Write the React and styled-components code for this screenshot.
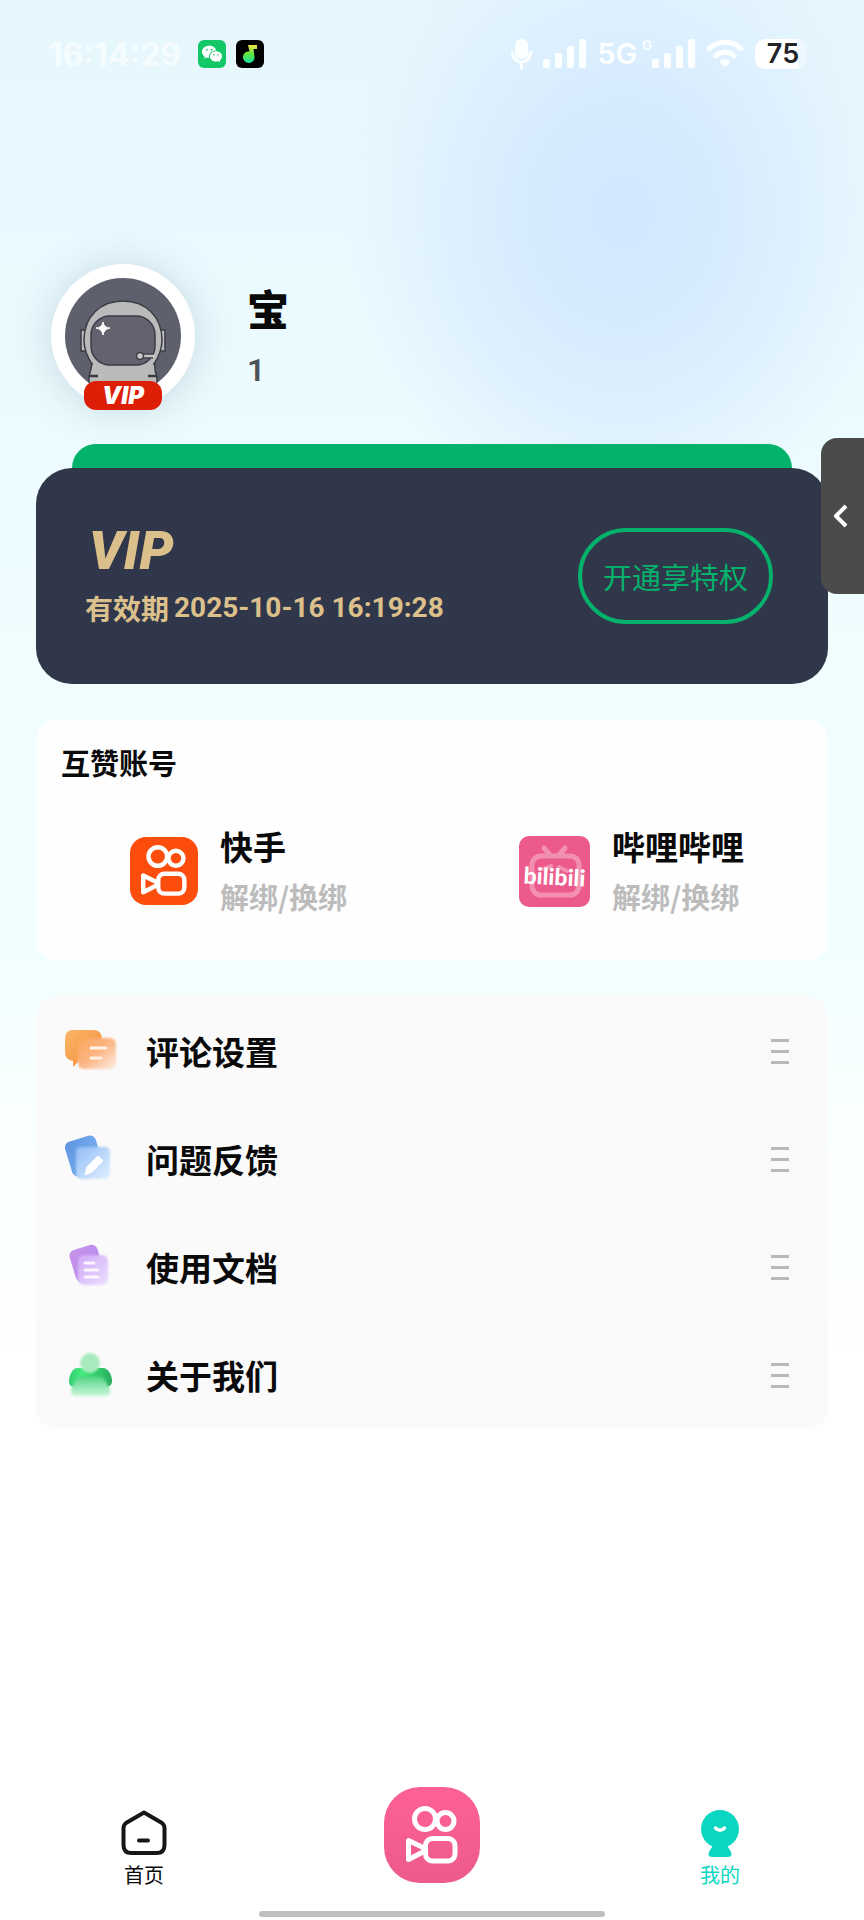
import styled, { createGlobalStyle, ThemeProvider } from 'styled-components';
import { RiWechatFill } from 'react-icons/ri';

const theme = {
  colors: {
    black: '#0a0a0a',
    gray: '#bcbcbc',
    slate: '#4d5258',
    green: '#04b26b',
    navy: '#31374a',
    gold: '#dcc08c',
    teal: '#0bd6c2',
    pink: '#fb5f92',
  },
  numberFont: "Roboto, 'Noto Sans CJK SC', sans-serif",
};

const GlobalStyle = createGlobalStyle`
  * {
    box-sizing: border-box;
  }
  body {
    margin: 0;
    font-family: 'Noto Sans CJK SC', sans-serif;
    color: #0a0a0a;
  }
  button {
    padding: 0;
    border: none;
    background: none;
    font-family: inherit;
    color: inherit;
    cursor: pointer;
  }
  a {
    color: inherit;
    text-decoration: none;
  }
  svg {
    display: block;
  }
`;

const Page = styled.div`
  position: relative;
  display: flex;
  flex-direction: column;
  min-height: 100vh;
  background:
    radial-gradient(ellipse 32% 17% at 72% 11%, #d2e8fe 0%, #d6ebfe 35%, #dff1fe 65%, rgba(230, 246, 255, 0) 100%),
    linear-gradient(#e6f6fd 0%, #eafaff 16%, #effdff 33%, #f2ffff 50%, #fbffff 60%, #ffffff 74%);
`;

/* status bar */
const StatusBar = styled.header`
  display: flex;
  justify-content: space-between;
  align-items: center;
  height: 108px;
  padding: 0 57px 0 49px;
  font-family: Inter, sans-serif;
  font-weight: 600;
  color: #fbffff;
`;

const StatusGroup = styled.div`
  display: flex;
  align-items: center;
  gap: ${({ gap }) => gap}px;
`;

const Clock = styled.time`
  width: 139px;
  font-size: 32px;
  font-weight: 700;
  opacity: 0.7;
`;

const AppBadge = styled.span`
  display: flex;
  justify-content: center;
  align-items: center;
  width: 28px;
  height: 28px;
  border-radius: 6px;
  background: ${({ color }) => color};
  color: #fff;
`;

const Network = styled.span`
  display: flex;
  align-items: flex-start;
  font-size: 29px;
  line-height: 32px;
`;

const Roaming = styled.sup`
  margin-left: 5px;
  font-size: 13px;
  line-height: 14px;
`;

const Battery = styled.span`
  width: 52px;
  height: 30px;
  padding-left: 4px;
  border-radius: 10px;
  background: linear-gradient(90deg, #fff 82%, rgba(255, 255, 255, 0.4) 82%);
  font-size: 27px;
  line-height: 30px;
  text-align: center;
  color: #22242a;
`;

/* profile */
const Profile = styled.section`
  display: flex;
  gap: 52px;
  padding: 156px 51px 36px;
`;

const Avatar = styled.div`
  position: relative;
  display: flex;
  justify-content: center;
  align-items: center;
  width: 144px;
  height: 144px;
  border-radius: 50%;
  background: #fff;
  box-shadow: 0 2px 42px rgba(80, 110, 120, 0.24);
`;

const AvatarTag = styled.span`
  position: absolute;
  left: 50%;
  bottom: -2px;
  width: 78px;
  height: 29px;
  margin-left: -39px;
  border-radius: 12px;
  background: #dd1f07;
  font-family: Inter, sans-serif;
  font-size: 24px;
  font-style: italic;
  font-weight: 900;
  line-height: 29px;
  text-align: center;
  color: #fff;
`;

const ProfileText = styled.div`
  display: flex;
  flex-direction: column;
  gap: 14px;
  padding-top: 16px;
`;

const Nickname = styled.h1`
  margin: 0;
  font-size: 42px;
  font-weight: 900;
  line-height: 56px;
`;

const UserId = styled.span`
  font-family: ${({ theme }) => theme.numberFont};
  font-size: 32px;
  font-weight: 600;
  line-height: 40px;
  color: ${({ theme }) => theme.colors.slate};
`;

/* vip */
const VipStrip = styled.div`
  height: 24px;
  margin: 0 72px;
  border-radius: 24px 24px 0 0;
  background: ${({ theme }) => theme.colors.green};
`;

const VipCard = styled.section`
  display: flex;
  justify-content: space-between;
  align-items: center;
  margin: 0 36px 36px;
  padding: 56px 55px 56px 49px;
  border-radius: 36px;
  background: ${({ theme }) => theme.colors.navy};
  color: ${({ theme }) => theme.colors.gold};
`;

const VipInfo = styled.div`
  display: flex;
  flex-direction: column;
  gap: 10px;
`;

const VipTitle = styled.strong`
  padding-left: 4px;
  font-family: Roboto, sans-serif;
  font-size: 54px;
  font-style: italic;
  font-weight: 900;
  line-height: 54px;
`;

const Expire = styled.span`
  display: flex;
  gap: 5px;
  font-size: 28px;
  font-weight: 700;
  line-height: 40px;

  time {
    font-family: ${({ theme }) => theme.numberFont};
  }
`;

const OpenButton = styled.button`
  width: 195px;
  height: 96px;
  border: 4px solid ${({ theme }) => theme.colors.green};
  border-radius: 48px;
  font-size: 29px;
  color: ${({ theme }) => theme.colors.green};
`;

const SideHandle = styled.button`
  position: absolute;
  top: 438px;
  right: 0;
  display: flex;
  align-items: center;
  width: 43px;
  height: 156px;
  padding-left: 12px;
  border-radius: 16px 0 0 16px;
  background: #4b4b4b;
`;

/* cards */
const Card = styled.section`
  margin: 0 36px 36px;
  border-radius: 20px;
  background: ${({ background }) => background};
`;

const CardTitle = styled.h2`
  margin: 0;
  padding: 21px 25px 0;
  font-size: 29px;
  line-height: 42px;
`;

const AccountList = styled.div`
  display: grid;
  grid-template-columns: 1fr 1fr;
  padding: 41px 0 42px 6px;
`;

const Account = styled.div`
  display: flex;
  justify-content: center;
  align-items: center;
  gap: 22px;
`;

const AccountText = styled.div`
  display: flex;
  flex-direction: column;
  align-items: flex-start;
  gap: 6px;
`;

const AccountName = styled.strong`
  font-size: 33px;
  line-height: 44px;
`;

const BindButton = styled.button`
  font-size: 29px;
  font-weight: 700;
  line-height: 44px;
  color: ${({ theme }) => theme.colors.gray};
`;

const LogoBox = styled.span`
  display: flex;
  justify-content: center;
  align-items: center;
  width: ${({ size }) => size}px;
  height: ${({ size }) => size}px;
  border-radius: ${({ radius }) => radius}px;
  background: ${({ background }) => background};
`;

/* menu */
const MenuRow = styled.button`
  display: flex;
  align-items: center;
  gap: 26px;
  width: 100%;
  height: 108px;
  padding: 2px 39px 0 26px;
  font-size: 33px;
  font-weight: 700;
`;

const MenuLabel = styled.span`
  flex: 1;
  text-align: left;
`;

/* bottom tabs */
const TabBar = styled.nav`
  display: grid;
  grid-template-columns: repeat(3, 1fr);
  justify-items: center;
  margin-top: auto;
`;

const Tab = styled.a`
  display: flex;
  flex-direction: column;
  align-items: center;
  gap: 4px;
  padding-top: 22px;
  font-size: 20px;
  line-height: 28px;
  color: ${({ theme, $active }) => ($active ? theme.colors.teal : theme.colors.black)};
`;

const HomeIndicator = styled.div`
  width: 40%;
  height: 6px;
  margin: 22px auto 3px;
  border-radius: 3px;
  background: #bfbfbf;
`;

const SignalIcon = () => (
  <svg width='43' height='30' viewBox='0 0 43 30' fill='currentColor'>
    <rect x='0' y='20' width='7' height='9' rx='2' />
    <rect x='12' y='14' width='7' height='15' rx='2' />
    <rect x='24' y='7' width='7' height='22' rx='2' />
    <rect x='36' y='0' width='7' height='29' rx='2' />
  </svg>
);

const MicIcon = () => (
  <svg width='21' height='32' viewBox='0 0 21 32' fill='none' stroke='currentColor' strokeWidth='3'>
    <rect x='4' y='1' width='13' height='20' rx='6' fill='currentColor' stroke='none' />
    <path d='M1.500 14c0 6 4 10 9 10s9-4 9-10M10.500 24v7' strokeLinecap='round' />
  </svg>
);

const WifiIcon = () => (
  <svg width='38' height='30' viewBox='0 0 38 30' fill='none' stroke='currentColor' strokeWidth='5' strokeLinecap='round'>
    <path d='M3 9.500C12 1 26 1 35 9.500' />
    <path d='M9.500 17c5.500-5 13.500-5 19 0' />
    <path d='M15 22.500q4-3 8 0L19 27z' fill='currentColor' strokeWidth='2' strokeLinejoin='round' />
  </svg>
);

const MusicIcon = () => (
  <svg width='28' height='28' viewBox='0 0 28 28'>
    <defs>
      <linearGradient id='music' x1='0' y1='0' x2='0' y2='1'>
        <stop offset='0' stopColor='#f2e34c' />
        <stop offset='0.5' stopColor='#5be83f' />
        <stop offset='1' stopColor='#18dfa5' />
      </linearGradient>
    </defs>
    <path d='M12 5h9v4h-3.500l1 7.500a5.800 5.800 0 1 1-5-5z' fill='url(#music)' />
  </svg>
);

const Astronaut = () => (
  <svg width='116' height='116' viewBox='0 0 116 116'>
    <defs>
      <clipPath id='face'>
        <circle cx='58' cy='58' r='58' />
      </clipPath>
    </defs>
    <g clipPath='url(#face)' stroke='#3a3b44' strokeWidth='1.500'>
      <rect width='116' height='116' fill='#5f606d' stroke='none' />
      <path d='M27 84q-1 9-3 14v22h68V98q-3-5-2-14z' fill='#bababa' />
      <path d='M20 52h-4v21h5zM96 52h4v21h-5z' fill='#bababa' />
      <path
        d='M58 23c-22 0-39 15-39 39 0 11 4 18 8 24h62c4-6 8-13 8-24 0-24-17-39-39-39z'
        fill='#bababa'
      />
      <path d='M28 83h60v7H28z' fill='#bababa' stroke='none' />
      <rect x='26' y='38' width='64' height='49' rx='19' fill='#62636f' />
      <path d='M76 78h12' stroke='#3a3b44' strokeWidth='5' />
      <path d='M76 78h14' stroke='#c6c6c6' strokeWidth='2.500' />
      <circle cx='75' cy='78' r='3.500' fill='#c6c6c6' />
      <path d='M24 98h9M83 98h9' strokeWidth='2.500' />
    </g>
    <path d='M38 44q1 6 7 6-6 1-7 7-1-6-7-7 6 0 7-6z' fill='#fff' stroke='#fff' strokeLinejoin='round' />
  </svg>
);

const KuaishouGlyph = ({ width }) => (
  <svg width={width} viewBox='0 0 52 58' fill='none' stroke='#fff' strokeWidth='5' strokeLinejoin='round'>
    <circle cx='19' cy='13' r='10.500' />
    <circle cx='39.500' cy='15' r='8.500' />
    <rect x='19.500' y='32.500' width='29.500' height='22.500' rx='7' />
    <path d='M2.500 34.500v19L18 45.500v-3.500z' />
  </svg>
);

const BilibiliLogo = () => (
  <svg width='71' height='71' viewBox='0 0 71 71'>
    <rect width='71' height='71' rx='10' fill='#ec5a8b' />
    <g fill='none' stroke='#f38fb2' strokeWidth='5' strokeLinecap='round'>
      <rect x='13' y='20' width='47' height='39' rx='9' />
      <path d='M25 12l6 7M46 12l-6 7' />
      <path d='M24 33l8-3M40 31l8 4' strokeWidth='4' />
    </g>
    <text
      x='35.500'
      y='49'
      textAnchor='middle'
      fontFamily='Lato, sans-serif'
      fontSize='23'
      fontWeight='900'
      fill='#fff'
      transform='rotate(3 35 40)'
    >
      bilibili
    </text>
  </svg>
);

const CommentIcon = () => (
  <svg width='58' height='48' viewBox='0 0 58 48'>
    <defs>
      <linearGradient id='cmBack' x1='0' y1='0' x2='1' y2='1'>
        <stop offset='0' stopColor='#f9b667' />
        <stop offset='1' stopColor='#f78b3b' />
      </linearGradient>
      <linearGradient id='cmFront' x1='0' y1='0' x2='1' y2='1'>
        <stop offset='0' stopColor='#fba45a' />
        <stop offset='0.5' stopColor='#fbb684' />
        <stop offset='1' stopColor='#ffe6d8' stopOpacity='0.8' />
      </linearGradient>
      <filter id='cmSoft' x='-20%' y='-20%' width='140%' height='140%'>
        <feGaussianBlur stdDeviation='1' />
      </filter>
    </defs>
    <path d='M11 3h20q9 0 9 9v14q0 8-9 8H17l-6 6v-6q-8-1-8-9V12q0-9 8-9z' fill='url(#cmBack)' />
    <rect x='16' y='11' width='38' height='31' rx='6' fill='url(#cmFront)' filter='url(#cmSoft)' />
    <path d='M29 21h15M29 31h10' stroke='#fff1e4' strokeWidth='3' strokeLinecap='round' />
  </svg>
);

const FeedbackIcon = () => (
  <svg width='58' height='48' viewBox='0 0 58 48'>
    <defs>
      <linearGradient id='fbBack' x1='0' y1='0' x2='1' y2='1'>
        <stop offset='0' stopColor='#5c95df' />
        <stop offset='1' stopColor='#83b5f5' />
      </linearGradient>
      <linearGradient id='fbFront' x1='0' y1='0' x2='1' y2='1'>
        <stop offset='0' stopColor='#8fbcf6' />
        <stop offset='1' stopColor='#e3f1ff' />
      </linearGradient>
      <filter id='fbSoft' x='-20%' y='-20%' width='140%' height='140%'>
        <feGaussianBlur stdDeviation='1' />
      </filter>
    </defs>
    <rect x='6' y='3' width='32' height='36' rx='6' fill='url(#fbBack)' transform='rotate(-17 22 21)' />
    <rect x='14' y='12' width='34' height='32' rx='5' fill='url(#fbFront)' filter='url(#fbSoft)' />
    <path d='M23 40l2-8 11-11 5 5-11 11z' fill='#fff' stroke='#fff' strokeLinejoin='round' />
  </svg>
);

const DocIcon = () => (
  <svg width='58' height='48' viewBox='0 0 58 48'>
    <defs>
      <linearGradient id='docBack' x1='0' y1='0' x2='1' y2='1'>
        <stop offset='0' stopColor='#c693ea' />
        <stop offset='1' stopColor='#b58bee' />
      </linearGradient>
      <linearGradient id='docFront' x1='0' y1='0' x2='1' y2='1'>
        <stop offset='0' stopColor='#cfa8f7' />
        <stop offset='1' stopColor='#ebdffe' />
      </linearGradient>
      <filter id='docSoft' x='-20%' y='-20%' width='140%' height='140%'>
        <feGaussianBlur stdDeviation='1' />
      </filter>
    </defs>
    <rect x='10' y='4' width='29' height='33' rx='6' fill='url(#docBack)' transform='rotate(-17 24 20)' />
    <rect x='16' y='12' width='30' height='30' rx='6' fill='url(#docFront)' filter='url(#docSoft)' />
    <path d='M23 20h9M23 27h13M23 34h13' stroke='#fbf5ff' strokeWidth='3' strokeLinecap='round' />
  </svg>
);

const AboutIcon = () => (
  <svg width='58' height='48' viewBox='0 0 58 48'>
    <defs>
      <linearGradient id='abBack' x1='0' y1='0' x2='1' y2='0'>
        <stop offset='0' stopColor='#35cf75' />
        <stop offset='0.3' stopColor='#43ea7c' />
        <stop offset='1' stopColor='#27ad5c' />
      </linearGradient>
      <linearGradient id='abFront' x1='0' y1='0' x2='0' y2='1'>
        <stop offset='0' stopColor='#54d588' />
        <stop offset='1' stopColor='#cdf7da' />
      </linearGradient>
      <filter id='abSoft' x='-20%' y='-20%' width='140%' height='140%'>
        <feGaussianBlur stdDeviation='1' />
      </filter>
    </defs>
    <path d='M15 17h26c5 0 9 7 9 13 0 4-3 6-6 6H13c-4 0-6-2-6-6 0-6 4-13 8-13z' fill='url(#abBack)' />
    <circle cx='28' cy='12' r='10' fill='#a9ebbf' filter='url(#abSoft)' />
    <path d='M19 26h19q3 0 5 3l5 9q1 7-4 7H13q-5 0-4-7l5-9q2-3 5-3z' fill='url(#abFront)' filter='url(#abSoft)' />
  </svg>
);

const LinesIcon = () => (
  <svg width='18' height='25' viewBox='0 0 18 25' stroke='#b9b9b9' strokeWidth='3'>
    <path d='M0 1.500h18M0 12.500h18M0 23.500h18' />
  </svg>
);

const HomeIcon = () => (
  <svg width='46' height='48' viewBox='0 0 46 48' fill='none' stroke='#16171a' strokeWidth='4' strokeLinecap='round' strokeLinejoin='round'>
    <path d='M23 3.500L41 14q2.500 2 2.500 5v17q0 8-8 8h-25q-8 0-8-8V19q0-3 2.500-5z' />
    <path d='M18 31.500h9' />
  </svg>
);

const MineIcon = () => (
  <svg width='40' height='48' viewBox='0 0 40 48'>
    <circle cx='20' cy='20' r='19' fill='#0bd6c2' />
    <path d='M12 35h16q-1 3 2 6 4 7-2 7H12q-6 0-2-7 3-3 2-6z' fill='#0bd6c2' />
    <path d='M15.500 19q4.500 4.500 9 0' fill='none' stroke='#fff' strokeWidth='3.500' strokeLinecap='round' />
  </svg>
);

const menus = [
  { label: '评论设置', Icon: CommentIcon },
  { label: '问题反馈', Icon: FeedbackIcon },
  { label: '使用文档', Icon: DocIcon },
  { label: '关于我们', Icon: AboutIcon },
];

const App = () => {
  return (
    <ThemeProvider theme={theme}>
      <GlobalStyle />
      <Page>
        <StatusBar>
          <StatusGroup gap='10'>
            <Clock>16:14:29</Clock>
            <AppBadge color='#14c767'>
              <RiWechatFill size={22} />
            </AppBadge>
            <AppBadge color='#000'>
              <MusicIcon />
            </AppBadge>
          </StatusGroup>
          <StatusGroup gap='11'>
            <MicIcon />
            <SignalIcon />
            <StatusGroup gap='0'>
              <Network>
                5G<Roaming>G</Roaming>
              </Network>
              <SignalIcon />
            </StatusGroup>
            <WifiIcon />
            <Battery>75</Battery>
          </StatusGroup>
        </StatusBar>

        <Profile>
          <Avatar>
            <Astronaut />
            <AvatarTag>VIP</AvatarTag>
          </Avatar>
          <ProfileText>
            <Nickname>宝</Nickname>
            <UserId>1</UserId>
          </ProfileText>
        </Profile>

        <VipStrip />
        <VipCard>
          <VipInfo>
            <VipTitle>VIP</VipTitle>
            <Expire>
              有效期<time>2025-10-16 16:19:28</time>
            </Expire>
          </VipInfo>
          <OpenButton>开通享特权</OpenButton>
        </VipCard>

        <Card background='#fefefe'>
          <CardTitle>互赞账号</CardTitle>
          <AccountList>
            <Account>
              <LogoBox size='68' radius='16' background='#fc4d0c'>
                <KuaishouGlyph width='46' />
              </LogoBox>
              <AccountText>
                <AccountName>快手</AccountName>
                <BindButton>解绑/换绑</BindButton>
              </AccountText>
            </Account>
            <Account>
              <BilibiliLogo />
              <AccountText>
                <AccountName>哔哩哔哩</AccountName>
                <BindButton>解绑/换绑</BindButton>
              </AccountText>
            </Account>
          </AccountList>
        </Card>

        <Card background='#fafafa'>
          {menus.map(({ label, Icon }) => (
            <MenuRow key={label}>
              <Icon />
              <MenuLabel>{label}</MenuLabel>
              <LinesIcon />
            </MenuRow>
          ))}
        </Card>

        <TabBar>
          <Tab href='#home'>
            <HomeIcon />
            首页
          </Tab>
          <a href='#kuaishou' aria-label='快手'>
            <LogoBox size='96' radius='36' background='linear-gradient(#ff6195, #ec5a8b)'>
              <KuaishouGlyph width='52' />
            </LogoBox>
          </a>
          <Tab href='#mine' $active>
            <MineIcon />
            我的
          </Tab>
        </TabBar>
        <HomeIndicator />

        <SideHandle aria-label='展开'>
          <svg width='15' height='24' viewBox='0 0 15 24' fill='none' stroke='#fff' strokeWidth='4'>
            <path d='M13 2L3 12l10 10' strokeLinejoin='round' />
          </svg>
        </SideHandle>
      </Page>
    </ThemeProvider>
  );
};

export default App;
